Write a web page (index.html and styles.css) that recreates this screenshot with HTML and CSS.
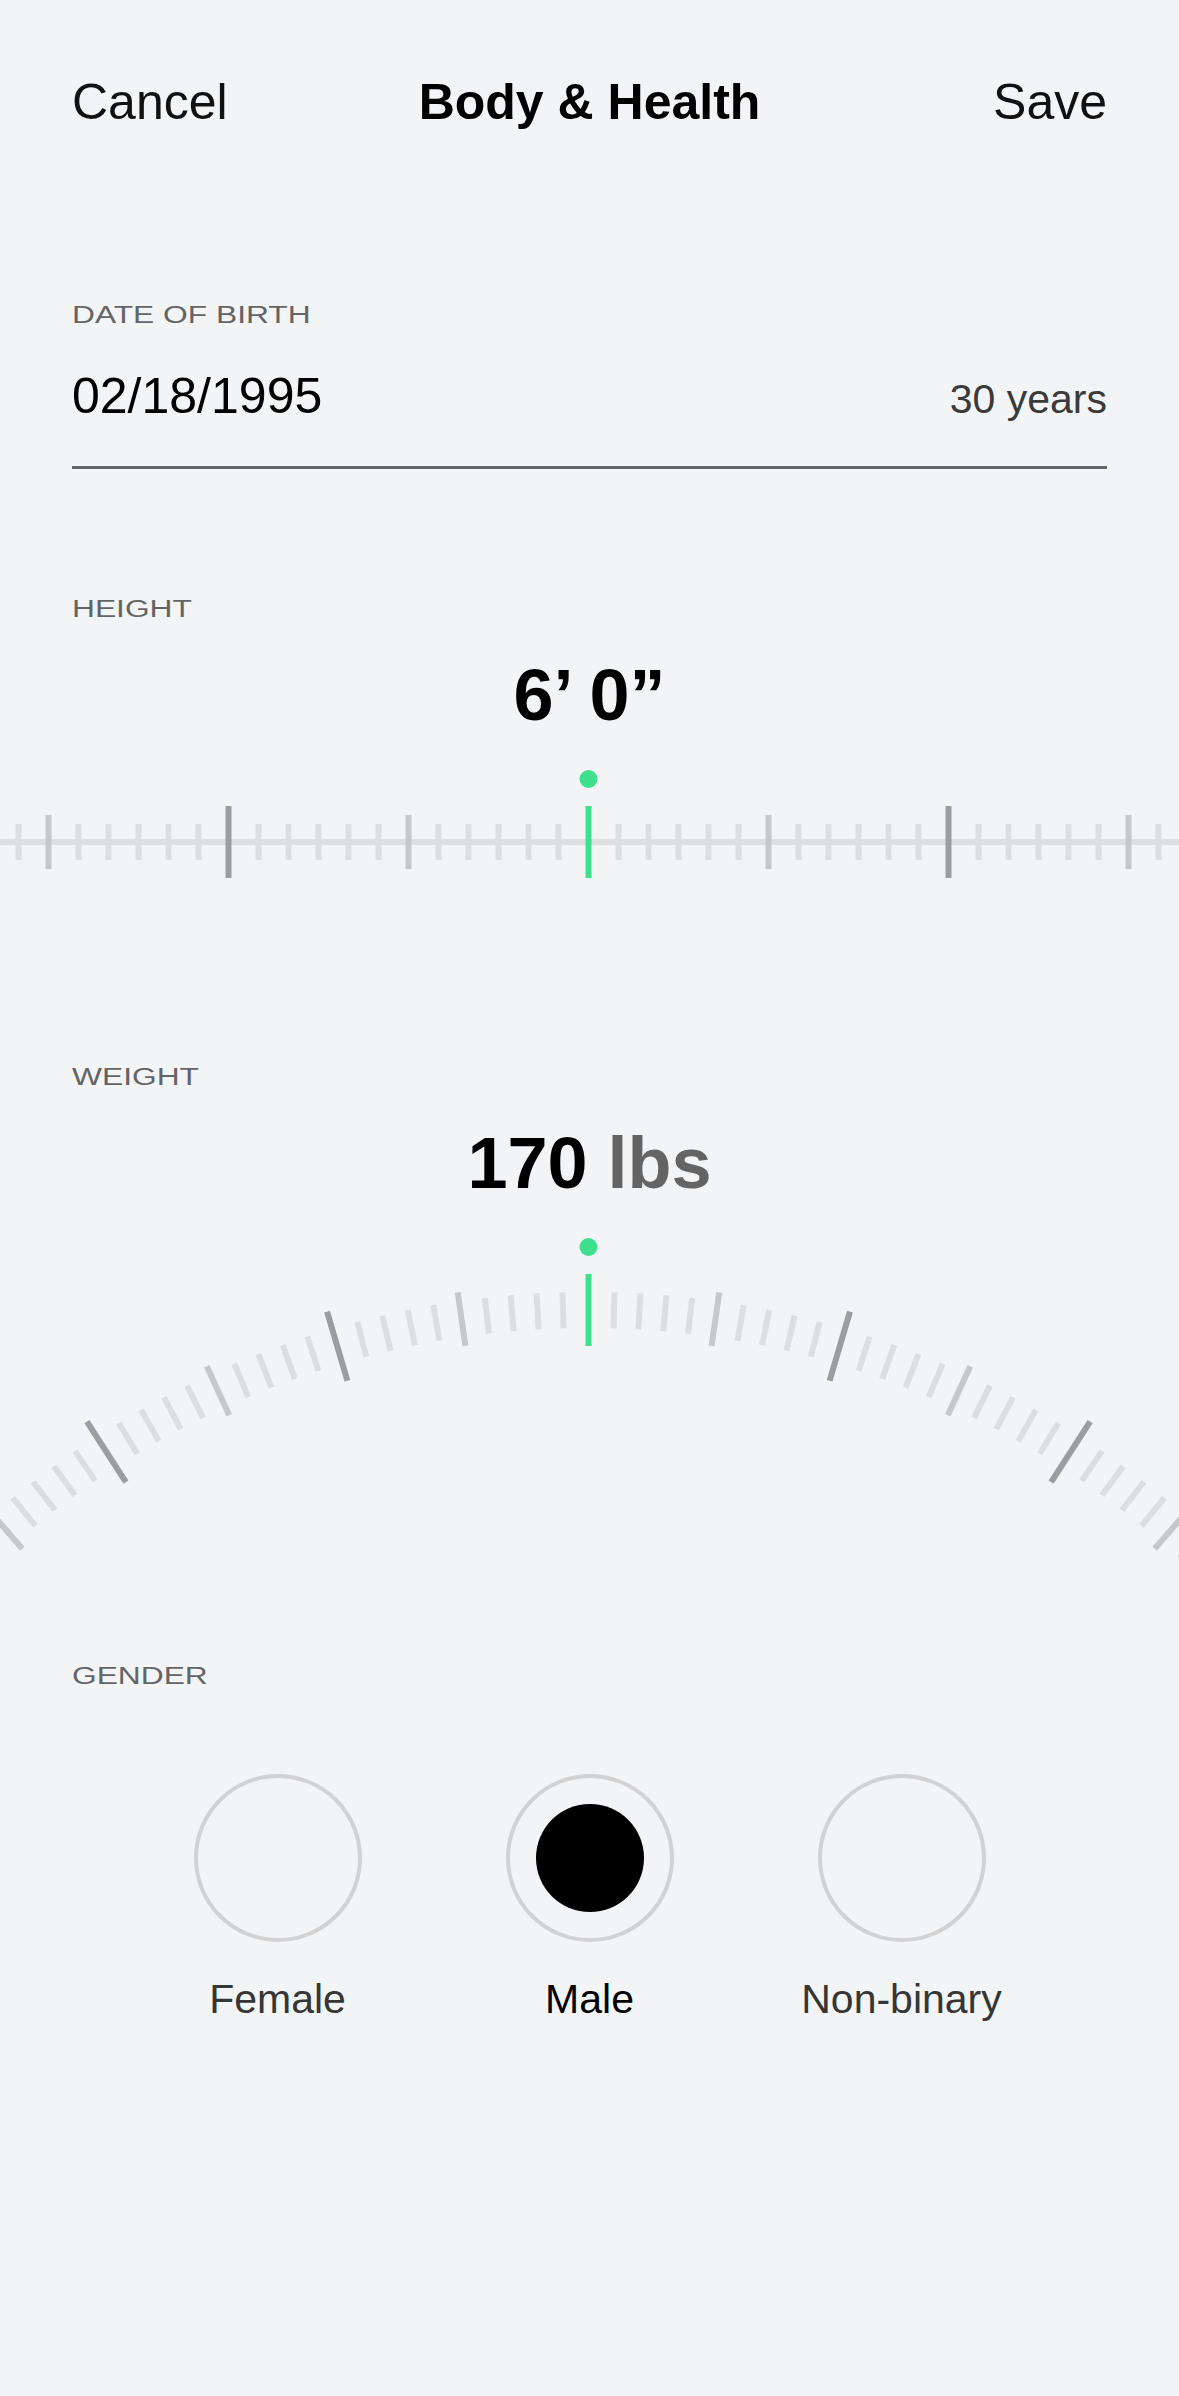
FILE: index.html
```html
<!DOCTYPE html>
<html lang="en">
<head>
    <meta charset="UTF-8">
    <meta name="viewport" content="width=device-width, initial-scale=1.0">
    <title>Body &amp; Health</title>
    <link rel="stylesheet" href="styles.css">
</head>
<body>
    <header class="topbar">
        <button class="topbar-btn">Cancel</button>
        <h1 class="topbar-title">Body &amp; Health</h1>
        <button class="topbar-btn topbar-save">Save</button>
    </header>

    <!-- Date of birth -->
    <section class="section section-dob">
        <div class="label"><span>DATE OF BIRTH</span></div>
        <div class="dob-row">
            <span class="dob-value">02/18/1995</span>
            <span class="dob-age">30 years</span>
        </div>
    </section>

    <!-- Height ruler -->
    <section class="section section-height">
        <div class="label"><span>HEIGHT</span></div>
        <div class="big-value">6’ 0”</div>
        <svg class="ruler" id="height-ruler" viewBox="0 0 1179 130" width="1179" height="130">
            <circle cx="588.5" cy="19" r="9" fill="#3de08c"/>
            <rect x="0" y="79" width="1179" height="6" fill="#dcdee0"/>
        </svg>
    </section>

    <!-- Weight dial -->
    <section class="section section-weight">
        <div class="label"><span>WEIGHT</span></div>
        <div class="big-value">170 <span class="unit">lbs</span></div>
        <svg class="dial" id="weight-dial" viewBox="0 0 1179 350" width="1179" height="350">
            <circle cx="588.5" cy="27" r="9" fill="#3de08c"/>
        </svg>
    </section>

    <!-- Gender -->
    <section class="section section-gender">
        <div class="label"><span>GENDER</span></div>
        <div class="gender-options">
            <div class="gender-option">
                <div class="radio"></div>
                <span class="gender-name">Female</span>
            </div>
            <div class="gender-option selected">
                <div class="radio"><div class="radio-dot"></div></div>
                <span class="gender-name">Male</span>
            </div>
            <div class="gender-option">
                <div class="radio"></div>
                <span class="gender-name">Non-binary</span>
            </div>
        </div>
    </section>

    <script>
        const NS = 'http://www.w3.org/2000/svg';
        const GREEN = '#3de08c';

        function tickColor(isMajor, isMedium) {
            if (isMajor) return '#9c9d9e';
            if (isMedium) return '#c7c8ca';
            return '#dcdee0';
        }

        function addLine(svg, x, y1, y2, color, transform) {
            const line = document.createElementNS(NS, 'line');
            line.setAttribute('x1', x);
            line.setAttribute('x2', x);
            line.setAttribute('y1', y1);
            line.setAttribute('y2', y2);
            line.setAttribute('stroke', color);
            line.setAttribute('stroke-width', 6);
            if (transform) line.setAttribute('transform', transform);
            svg.appendChild(line);
        }

        // Straight ruler: one tick per inch, 12 per foot
        const ruler = document.getElementById('height-ruler');
        for (let i = -20; i <= 20; i++) {
            if (i === 0) continue;
            const major = i % 12 === 0;
            const medium = i % 6 === 0;
            const len = major ? 72 : medium ? 54 : 36;
            addLine(ruler, 588.5 + i * 30, 82 - len / 2, 82 + len / 2, tickColor(major, medium));
        }
        addLine(ruler, 588.5, 46, 118, GREEN);

        // Curved dial: one tick per pound
        const dial = document.getElementById('weight-dial');
        const radius = 890;
        const step = 1.64;
        for (let i = -30; i <= 30; i++) {
            if (i === 0) continue;
            const major = i % 10 === 0;
            const medium = i % 5 === 0;
            const len = major ? 72 : medium ? 54 : 36;
            const rot = `rotate(${i * step} 588.5 ${90 + radius})`;
            addLine(dial, 588.5, 90 - len / 2, 90 + len / 2, tickColor(major, medium), rot);
        }
        addLine(dial, 588.5, 54, 126, GREEN);
    </script>
</body>
</html>
```

FILE: styles.css
```css
/* General */
body {
    margin: 0;
    padding: 0;
    background-color: #f3f4f6;
    font-family: "Liberation Sans", Arial, sans-serif;
    color: #000;
    overflow-x: hidden;
}

/* Top bar */
.topbar {
    display: grid;
    grid-template-columns: 1fr auto 1fr;
    align-items: center;
    padding: 72px 72px 0;
    height: 60px;
}

.topbar-btn {
    background: none;
    border: none;
    padding: 0;
    font-family: inherit;
    font-size: 50px;
    line-height: 60px;
    color: #111;
    text-align: left;
    justify-self: start;
}

.topbar-save {
    justify-self: end;
    text-align: right;
}

.topbar-title {
    margin: 0;
    font-size: 50px;
    line-height: 60px;
    font-weight: bold;
}

/* Sections */
.section {
    padding: 0 72px;
}

.label {
    font-size: 23px;
    line-height: 28px;
    color: #626466;
}

/* the label face is an extended grotesk, stretch Liberation to match */
.label span {
    display: inline-block;
    transform: scaleX(1.38);
    transform-origin: left center;
}

.section-dob {
    margin-top: 169px;
}

.dob-row {
    display: flex;
    justify-content: space-between;
    align-items: baseline;
    margin-top: 37px;
    padding-bottom: 40px;
    border-bottom: 3px solid #666;
}

.dob-value {
    font-size: 50px;
    line-height: 60px;
}

.dob-age {
    font-size: 41px;
    color: #3a3a3a;
}

.section-height {
    margin-top: 126px;
}

.big-value {
    margin-top: 32px;
    font-size: 72px;
    line-height: 80px;
    font-weight: bold;
    text-align: center;
}

.unit {
    color: #646464;
}

.ruler,
.dial {
    display: block;
    margin: 0 -72px;
}

.ruler {
    margin-top: 25px;
}

.section-weight {
    margin-top: 173px;
}

.dial {
    margin-top: 17px;
}

/* Gender */
.section-gender {
    margin-top: 92px;
}

.gender-options {
    display: grid;
    grid-template-columns: repeat(3, 312px);
    justify-content: center;
    margin-top: 84px;
}

.gender-option {
    display: flex;
    flex-direction: column;
    align-items: center;
}

.radio {
    box-sizing: border-box;
    width: 168px;
    height: 168px;
    border: 4px solid #d2d2d3;
    border-radius: 50%;
    display: flex;
    align-items: center;
    justify-content: center;
}

.radio-dot {
    width: 108px;
    height: 108px;
    border-radius: 50%;
    background-color: #000;
}

.gender-name {
    margin-top: 32px;
    font-size: 41px;
    line-height: 50px;
    color: #363636;
}

.selected .gender-name {
    color: #000;
}
```
